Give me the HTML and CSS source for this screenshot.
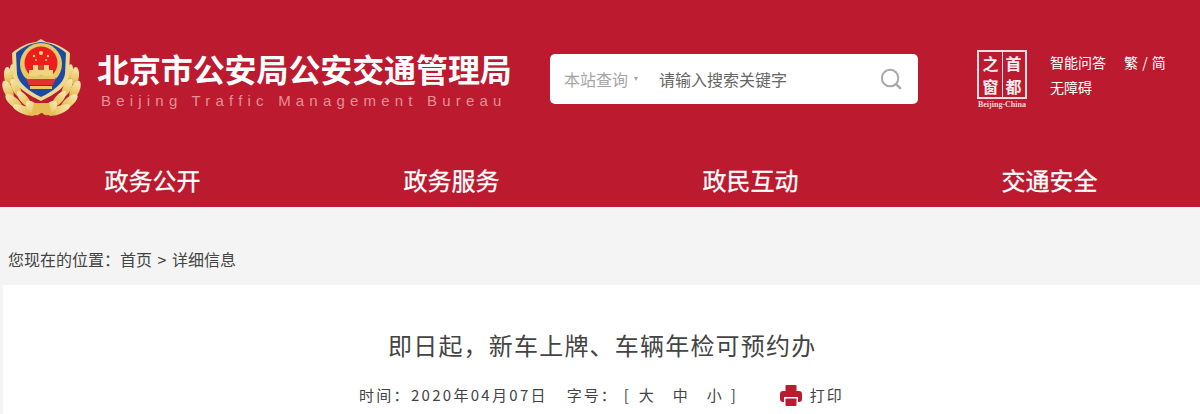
FILE: index.html
```html
<!DOCTYPE html>
<html lang="zh-CN">
<head>
<meta charset="utf-8">
<title>即日起，新车上牌、车辆年检可预约办</title>
<link rel="stylesheet" href="styles.css">
</head>
<body>
<header class="header">
  <div class="top">
    <div class="brand">
      <svg class="emblem" viewBox="0 36 84 84" aria-hidden="true">
        <defs>
          <linearGradient id="gold" x1="0" y1="0" x2="0" y2="1">
            <stop offset="0" stop-color="#f6e8b4"/>
            <stop offset="0.6" stop-color="#eccb6c"/>
            <stop offset="1" stop-color="#dcaa42"/>
          </linearGradient>
          <filter id="soft" x="-5%" y="-5%" width="110%" height="110%"><feGaussianBlur stdDeviation="0.45"/></filter>
          <g id="branch" fill="url(#gold)">
            <ellipse cx="8" cy="76" rx="4" ry="9" transform="rotate(-6 8 76)"/>
            <ellipse cx="14" cy="73" rx="3.500" ry="9" transform="rotate(-14 14 73)"/>
            <ellipse cx="8" cy="90" rx="4.500" ry="10" transform="rotate(-24 8 90)"/>
            <ellipse cx="16" cy="88" rx="4" ry="10" transform="rotate(-26 16 88)"/>
            <ellipse cx="14" cy="102" rx="4.500" ry="11" transform="rotate(-48 14 102)"/>
            <ellipse cx="24" cy="99" rx="4" ry="10" transform="rotate(-40 24 99)"/>
            <ellipse cx="24" cy="110" rx="4" ry="12" transform="rotate(-68 24 110)"/>
            <ellipse cx="33" cy="108" rx="5" ry="9" transform="rotate(-45 33 108)"/>
          </g>
        </defs>
        <g filter="url(#soft)">
          <use href="#branch"/>
          <use href="#branch" transform="matrix(-1 0 0 1 83 0)"/>
          <path d="M34 103h15l3 13-10-3-11 3z" fill="#e6bd55"/>
          <path d="M41 39l5 3c9 1 17 5 24 11l-1 22c-1 11-15 20-28 26-13-6-27-15-28-26l-1-22c7-6 15-10 24-11z" fill="#efd88f"/>
          <path d="M41 42c9 1 17 4 25 11l-1 21c-1 9-13 18-24 23-11-5-23-14-24-23l-1-21c8-7 16-10 25-11z" fill="#1c4aa6"/>
          <circle cx="41" cy="64" r="21" fill="#e9c866"/>
          <circle cx="41" cy="63" r="16.500" fill="#ee1f1c"/>
          <path d="M29 70h24v6H29zM33 65h16v5H33z" fill="#f0d481"/>
          <path d="M38 65h6v5h-6z" fill="#c94a2a"/>
          <path d="M26 78c9-3 21-3 30 0l-3 7H29z" fill="#e0332e"/>
          <path d="M27 76h28v3H27z" fill="#e8c662"/>
          <path d="M30 86h22v3H30z" fill="#e8c662"/>
          <circle cx="41" cy="53" r="2" fill="#f5dc6a"/>
          <circle cx="34" cy="56" r="1.200" fill="#f5dc6a"/>
          <circle cx="48" cy="56" r="1.200" fill="#f5dc6a"/>
          <circle cx="36" cy="60" r="1" fill="#f5dc6a"/>
          <circle cx="46" cy="60" r="1" fill="#f5dc6a"/>
        </g>
      </svg>
      <div class="brand-text">
        <div class="brand-cn">北京市公安局公安交通管理局</div>
        <div class="brand-en">Beijing Traffic Management Bureau</div>
      </div>
    </div>
    <div class="search">
      <span class="scope">本站查询</span>
      <span class="caret"></span>
      <span class="placeholder">请输入搜索关键字</span>
      <svg class="search-icon" viewBox="0 0 24 24" aria-hidden="true">
        <circle cx="11" cy="11" r="9" fill="none" stroke="#a8a8a8" stroke-width="2.200"/>
        <path d="M17.500 17.500L22 22" stroke="#a8a8a8" stroke-width="2.600" stroke-linecap="round"/>
      </svg>
    </div>
    <div class="capital">
      <div class="capital-box">
        <span>之</span><span>首</span><span>窗</span><span>都</span>
      </div>
      <div class="capital-en">Beijing-China</div>
    </div>
    <div class="links">
      <div class="links-row"><span>智能问答</span><span class="lang">繁 / 简</span></div>
      <div class="links-row"><span>无障碍</span></div>
    </div>
  </div>
  <nav class="nav">
    <a>政务公开</a>
    <a>政务服务</a>
    <a>政民互动</a>
    <a>交通安全</a>
  </nav>
</header>
<div class="crumbs">您现在的位置：首页 &gt; 详细信息</div>
<main class="panel">
  <h1 class="title">即日起，新车上牌、车辆年检可预约办</h1>
  <div class="meta">
    <span class="date">时间：2020年04月07日</span>
    <span class="size">字号：<span class="bracket">[</span><span class="s first">大</span><span class="s">中</span><span class="s last">小</span><span class="bracket">]</span></span>
    <span class="print">
      <svg class="print-icon" viewBox="0 0 22 21" aria-hidden="true">
        <rect x="5.500" y="0" width="11" height="7" rx="1" fill="#bc1a2e"/>
        <rect x="0" y="6" width="22" height="11" rx="3" fill="#bc1a2e"/>
        <rect x="4" y="12" width="14" height="9" fill="#fff"/>
        <rect x="5.500" y="13.500" width="11" height="7.500" rx="1" fill="#bc1a2e"/>
      </svg>
      <span>打印</span>
    </span>
  </div>
</main>
</body>
</html>
```
FILE: styles.css
```css
* { box-sizing: border-box; }
html, body { margin: 0; padding: 0; }
body {
  width: 1200px;
  height: 414px;
  overflow: hidden;
  background: #f4f4f4;
  font-family: "Noto Sans CJK SC", "Liberation Sans", sans-serif;
  color: #333;
}
.header { height: 207px; background: #bc1a2e; color: #fff; display: flex; flex-direction: column; }
.top { display: flex; align-items: flex-start; height: 156px; }
.brand { display: flex; align-items: flex-start; width: 550px; padding-top: 36px; }
.emblem { width: 84px; height: 84px; flex: none; }
.brand-text { margin: 12px 0 0 13px; }
.brand-cn { font-size: 32px; line-height: 40px; font-weight: 700; white-space: nowrap; letter-spacing: -0.1px; }
.brand-en {
  font-family: "Liberation Sans", sans-serif;
  font-size: 15px; line-height: 18px; margin: 4px 0 0 4px;
  letter-spacing: 5.2px; color: #e78e98; white-space: nowrap;
}
.search {
  width: 368px; height: 50px; margin-top: 54px; background: #fff; border-radius: 5px;
  display: flex; align-items: center; padding: 0 16px 0 14px; font-size: 16px;
}
.scope { color: #a6a6a6; }
.caret {
  width: 0; height: 0; margin-left: 6px;
  border-left: 2.500px solid transparent; border-right: 2.500px solid transparent; border-top: 4px solid #a6a6a6;
}
.placeholder { margin-left: 21px; color: #666; flex: 1; }
.search-icon { width: 22px; height: 22px; }
.capital { width: 52px; margin: 50px 0 0 58px; display: flex; flex-direction: column; align-items: center; }
.capital-box {
  width: 50px; height: 49px; border: 2px solid #f6dfe2; display: grid;
  grid-template-columns: 1fr 1fr; grid-template-rows: 1fr 1fr;
  background: linear-gradient(#f6dfe2, #f6dfe2) center / 1px 100% no-repeat;
}
.capital-box span { font-size: 16px; line-height: 22px; text-align: center; font-weight: 700; color: #fbeef0; }
.capital-en {
  font-family: "Liberation Serif", serif; font-size: 8px; line-height: 9px; font-weight: 700;
  margin-top: 1px; white-space: nowrap; color: #f3d4d8;
}
.links { margin: 50px 0 0 22px; font-size: 14px; line-height: 25px; }
.links-row { display: flex; gap: 18px; white-space: nowrap; }
.lang { word-spacing: 1px; }
.nav { display: grid; grid-template-columns: repeat(4, 299px); padding-left: 3px; }
.nav a { text-align: center; font-size: 24px; line-height: 47px; height: 51px; -webkit-text-stroke: 0.3px #fff; }
.crumbs { height: 78px; padding: 40px 0 0 8px; font-size: 16px; line-height: 24px; color: #444; white-space: nowrap; word-spacing: 2px; }
.panel { margin-left: 3px; height: 129px; background: #fff; padding-top: 42px; }
.title { margin: 0; font-size: 24px; line-height: 36px; font-weight: 400; letter-spacing: 1.2px; color: #444; padding-left: 385px; white-space: nowrap; }
.meta { display: flex; align-items: center; margin-top: 20px; padding-left: 356px; font-size: 15px; line-height: 24px; letter-spacing: 2px; color: #444; white-space: nowrap; }
.date { letter-spacing: 2.3px; }
.size { margin-left: 19px; display: flex; }
.bracket { width: 14px; margin-left: 6px; }
.s { width: 34px; }
.s.first { margin-left: 1px; }
.s.last { width: 18px; }
.print { margin-left: 35px; display: flex; align-items: center; gap: 8px; }
.print-icon { width: 22px; height: 21px; }
```
